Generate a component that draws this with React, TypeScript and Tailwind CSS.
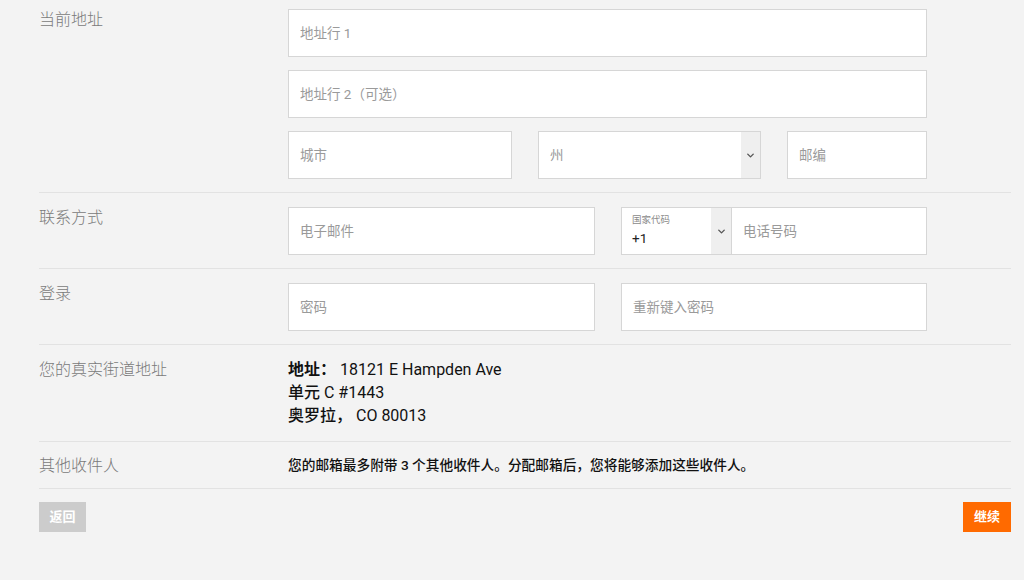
import React from 'react';
import { ChevronDown } from 'lucide-react';

const font = { fontFamily: "Roboto, 'Noto Sans CJK SC', sans-serif" };

const TextInput: React.FC<{ placeholder: string; className?: string }> = ({ placeholder, className = '' }) => (
  <input
    type="text"
    placeholder={placeholder}
    className={`h-[48px] bg-white border border-[#d6d6d6] px-[11px] text-[13.5px] text-[#333] placeholder:text-[#9a9a9a] outline-none ${className}`}
  />
);

const Row: React.FC<{ label: string; children: React.ReactNode; className?: string }> = ({ label, children, className = '' }) => (
  <div className={`flex border-b border-[#e2e2e2] ${className}`}>
    <div className="w-[249px] shrink-0 text-[16px] leading-[22px] text-[#7a7a7a] font-light">{label}</div>
    <div className="w-[639px]">{children}</div>
  </div>
);

export default function App() {
  return (
    <div className="min-h-[580px] bg-[#f3f3f3] pl-[39px] pr-[13px]" style={font}>
      <Row label="当前地址" className="pt-[9px] pb-[13px]">
        <div className="flex flex-col gap-[13px]">
          <TextInput placeholder="地址行 1" className="w-full" />
          <TextInput placeholder="地址行 2（可选）" className="w-full" />
          <div className="flex">
            <TextInput placeholder="城市" className="w-[224px]" />
            <div className="ml-[26px] w-[223px] h-[48px] flex bg-white border border-[#d6d6d6]">
              <div className="flex-1 px-[11px] flex items-center text-[13.5px] text-[#9a9a9a]">州</div>
              <div className="w-[19px] bg-[#efefef] flex items-center justify-center text-[#555]">
                <ChevronDown size={11} strokeWidth={3} />
              </div>
            </div>
            <TextInput placeholder="邮编" className="ml-[26px] w-[140px]" />
          </div>
        </div>
      </Row>

      <Row label="联系方式" className="pt-[14px] pb-[13px]">
        <div className="flex">
          <TextInput placeholder="电子邮件" className="w-[307px]" />
          <div className="ml-[26px] w-[306px] flex">
            <div className="w-[111px] h-[48px] flex bg-white border border-[#d6d6d6]">
              <div className="flex-1 pl-[10px] pt-[6px] flex flex-col">
                <span className="text-[9.5px] leading-[12px] text-[#8a8a8a]">国家代码</span>
                <span className="text-[13.5px] leading-[18px] text-[#222] mt-[3px]">+1</span>
              </div>
              <div className="w-[20px] bg-[#efefef] flex items-center justify-center text-[#555]">
                <ChevronDown size={11} strokeWidth={3} />
              </div>
            </div>
            <TextInput placeholder="电话号码" className="flex-1 min-w-0 border-l-0" />
          </div>
        </div>
      </Row>

      <Row label="登录" className="pt-[14px] pb-[13px]">
        <div className="flex">
          <TextInput placeholder="密码" className="w-[307px]" />
          <TextInput placeholder="重新键入密码" className="ml-[26px] w-[306px]" />
        </div>
      </Row>

      <Row label="您的真实街道地址" className="pt-[13px] pb-[14px] [&>div:first-child]:leading-[23px]">
        <div className="text-[16px] leading-[23px] text-[#111]">
          <div><span className="font-bold">地址：</span> 18121 E Hampden Ave</div>
          <div><span className="font-medium">单元</span> C #1443</div>
          <div><span className="font-medium">奥罗拉，</span> CO 80013</div>
        </div>
      </Row>

      <Row label="其他收件人" className="pt-[12px] pb-[10px] [&>div:first-child]:leading-[24px]">
        <div className="text-[13.7px] leading-[23px] font-medium text-[#111]">
          您的邮箱最多附带 3 个其他收件人。分配邮箱后，您将能够添加这些收件人。
        </div>
      </Row>

      <div className="flex justify-between pt-[13px]">
        <button className="w-[47px] h-[30px] bg-[#cccccc] text-white text-[13px] font-bold">返回</button>
        <button className="w-[48px] h-[30px] bg-[#ff6a00] text-white text-[13px] font-bold">继续</button>
      </div>
    </div>
  );
}
